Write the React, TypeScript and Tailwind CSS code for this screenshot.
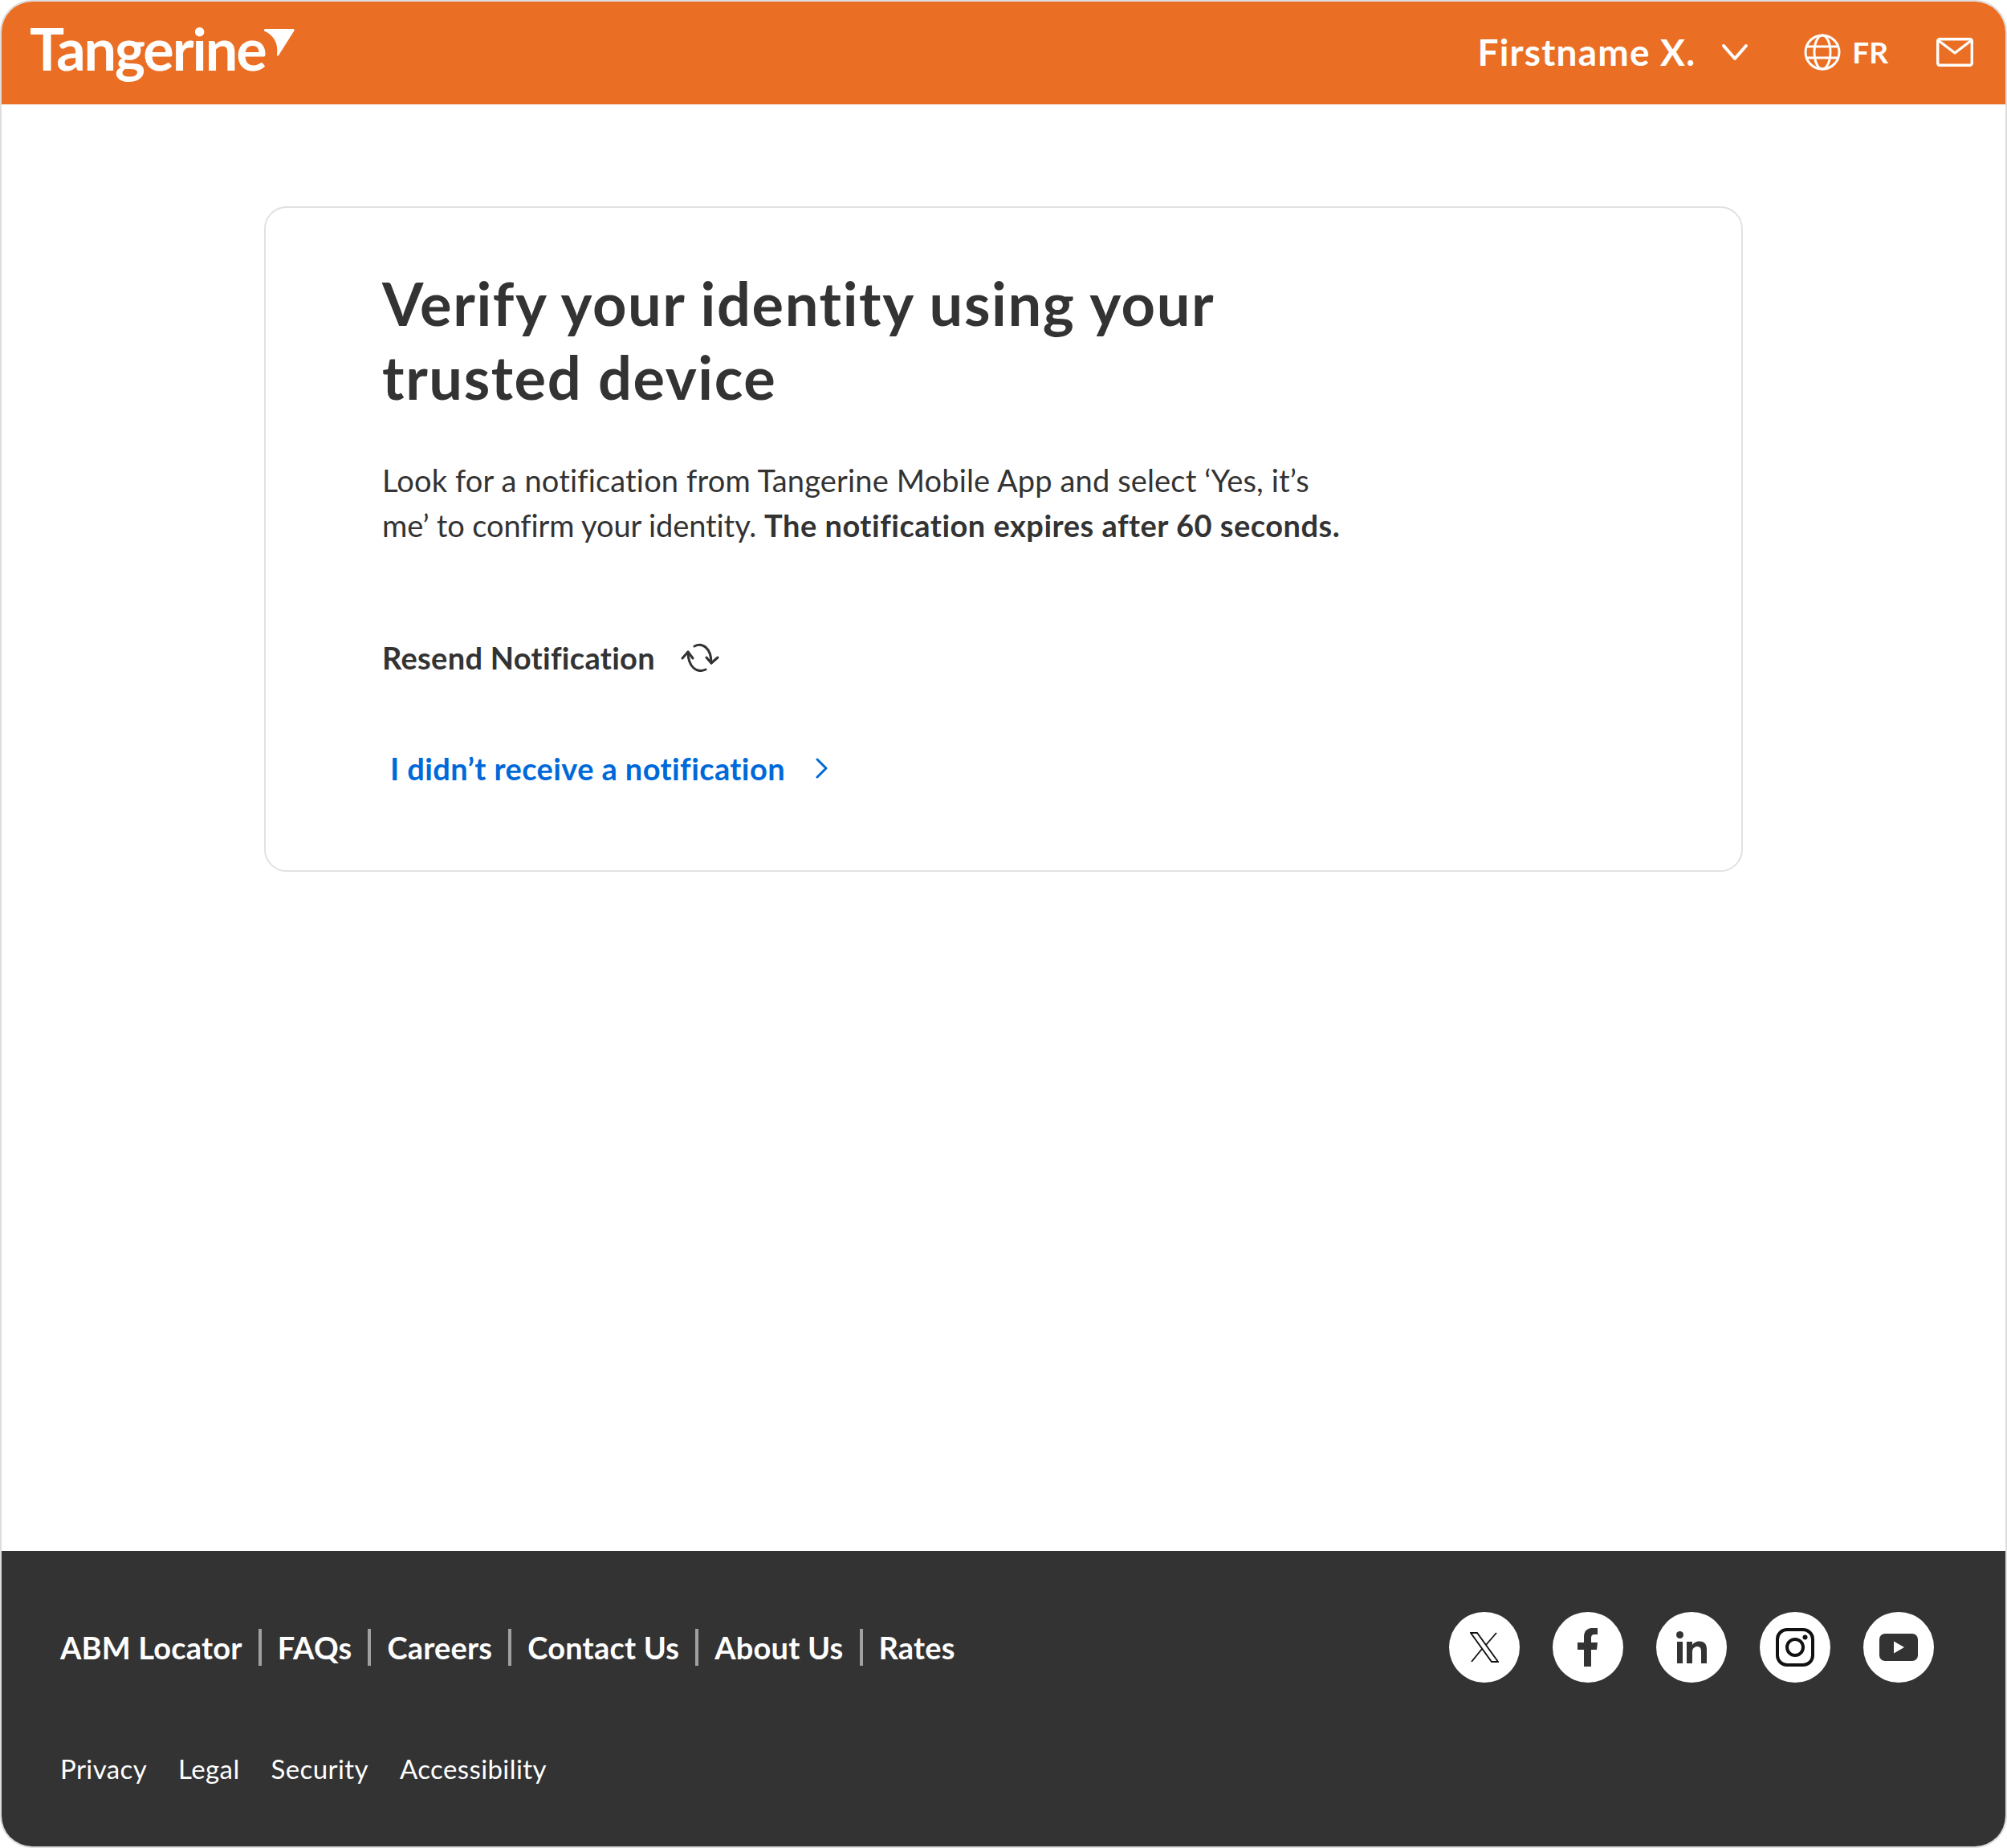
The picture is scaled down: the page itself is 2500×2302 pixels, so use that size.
const mainLinks = ['ABM Locator', 'FAQs', 'Careers', 'Contact Us', 'About Us', 'Rates'];
const legalLinks = ['Privacy', 'Legal', 'Security', 'Accessibility'];

function RefreshIcon() {
  return (
    <svg width="48" height="36" viewBox="0 0 48 36" fill="none" stroke="#333333" strokeWidth="3" strokeLinecap="round" strokeLinejoin="round">
      <path d="M17 4C27 -1 38 6 38 25" />
      <path d="M32 18L38 25L46 18" />
      <path d="M31 33C20 38 9 30 9 11" />
      <path d="M2 19L9 11L15 19" />
    </svg>
  );
}

function GlobeIcon() {
  return (
    <svg width="46" height="46" viewBox="0 0 46 46" fill="none" stroke="white" strokeWidth="3">
      <circle cx="23" cy="23" r="21" />
      <ellipse cx="23" cy="23" rx="10" ry="21" />
      <path d="M4 16H42M4 30H42" />
    </svg>
  );
}

function MailIcon() {
  return (
    <svg width="46" height="36" viewBox="0 0 46 36" fill="none" stroke="white" strokeWidth="3.4" strokeLinejoin="round">
      <rect x="1.700" y="1.700" width="42.600" height="32.600" rx="2.500" />
      <path d="M2 3L23 19L44 3" />
    </svg>
  );
}

function SocialCircle({ children }: { children: React.ReactNode }) {
  return <div className="w-[88px] h-[88px] rounded-full bg-white flex items-center justify-center">{children}</div>;
}

export default function App() {
  return (
    <div className="w-[2500px] h-[2302px] flex flex-col overflow-hidden rounded-[40px] border-2 border-[#dddddd] bg-white text-[#333333] font-['Lato',sans-serif]">
      {/* Header */}
      <header className="h-[128px] shrink-0 bg-[#ea6f24] text-white flex items-start justify-between pl-[35px] pr-[40px]">
        <div className="flex items-start pt-[15px]">
          <span className="text-[72px] leading-[86px] font-bold tracking-[-2.1px]">Tangerine</span>
          <svg className="mt-[19px] -ml-[2px]" width="38" height="34" viewBox="0 0 38 34" fill="white">
            <path d="M0 1C0 0 1 0 2 0H36C38 0 38 2 37 3L18 33C17 34 16 34 16 32C18 18 12 8 1 3C0 3 0 2 0 1Z" />
          </svg>
        </div>
        <div className="flex items-center h-[126px]">
          <span className="text-[46px] leading-[56px] font-bold tracking-[1.2px]">Firstname X.</span>
          <svg className="ml-[32px]" width="34" height="22" viewBox="0 0 34 22" fill="none" stroke="white" strokeWidth="4" strokeLinecap="round" strokeLinejoin="round">
            <path d="M3 3L17 19L31 3" />
          </svg>
          <div className="ml-[69px]">
            <GlobeIcon />
          </div>
          <span className="ml-[14px] text-[37px] font-bold">FR</span>
          <div className="ml-[60px]">
            <MailIcon />
          </div>
        </div>
      </header>

      {/* Card */}
      <main className="flex-1 px-[327px] pt-[127px]">
        <div className="h-[829px] rounded-[28px] border-2 border-[#e1e1e1] pl-[145px] pt-[73px]">
          <h1 className="text-[74px] leading-[92px] font-bold tracking-[1.6px]">
            Verify your identity using your
            <br />
            trusted device
          </h1>
          <p className="mt-[54px] text-[38px] leading-[56px] tracking-[0.15px]">
            Look for a notification from Tangerine Mobile App and select ‘Yes, it’s
            <br />
            <span className="tracking-[-0.1px]">me’ to confirm your identity.</span>{' '}
            <span className="font-bold tracking-[0.5px]">The notification expires after 60 seconds.</span>
          </p>
          <div className="mt-[109px] flex items-center gap-[32px]">
            <span className="text-[38px] leading-[56px] font-bold tracking-[0.3px]">Resend Notification</span>
            <RefreshIcon />
          </div>
          <a className="mt-[82px] ml-[10px] flex items-center text-[38px] leading-[56px] font-bold tracking-[0.4px] text-[#0069d9]">
            I didn’t receive a notification
            <svg className="ml-[37px]" width="16" height="26" viewBox="0 0 16 26" fill="none" stroke="#0069d9" strokeWidth="3" strokeLinecap="round" strokeLinejoin="round">
              <path d="M3 2L14 13L3 24" />
            </svg>
          </a>
        </div>
      </main>

      {/* Footer */}
      <footer className="h-[368px] shrink-0 bg-[#333333] text-white pl-[73px] pr-[89px]">
        <div className="flex items-center justify-between pt-[76px]">
          <div className="flex items-center">
            {mainLinks.map((link, i) => (
              <div key={link} className="flex items-center">
                <span className="text-[38px] leading-[46px] font-bold tracking-[0.2px]">{link}</span>
                {i < mainLinks.length - 1 && <span className="w-[4px] h-[46px] bg-[#a0a0a0] mx-[20px]" />}
              </div>
            ))}
          </div>
          <div className="flex gap-[41px]">
            <SocialCircle>
              <svg width="36" height="38" viewBox="0 0 36 38" fill="none" stroke="#111111" strokeWidth="1.8">
                <path d="M1 1H9L35 37H27Z" />
                <path d="M33 1L20 16" />
                <path d="M15 21L2 37" />
              </svg>
            </SocialCircle>
            <SocialCircle>
              {/* f */}
              <svg width="26" height="48" viewBox="0 0 26 48" fill="#333333">
                <path d="M8 48V27H0V18H8V11C8 3 13 0 19 0H25V8H21C18 8 17 10 17 12V18H25L24 27H17V48Z" />
              </svg>
            </SocialCircle>
            <SocialCircle>
              <svg width="38" height="40" viewBox="0 0 38 40" fill="#333333">
                <circle cx="4.500" cy="4.500" r="4.500" />
                <rect x="1" y="13" width="7" height="27" />
                <path d="M13 13H20V17C22 14 25 12.500 29 12.500C35 12.500 38 16 38 23V40H31V25C31 21 29.500 19 26.500 19C23 19 20 21 20 26V40H13Z" />
              </svg>
            </SocialCircle>
            <SocialCircle>
              <svg width="48" height="48" viewBox="0 0 48 48" fill="none" stroke="#111111" strokeWidth="4">
                <rect x="2" y="2" width="44" height="44" rx="12" />
                <circle cx="24" cy="24" r="10" />
                <circle cx="36.500" cy="11.500" r="3" fill="#111111" stroke="none" />
              </svg>
            </SocialCircle>
            <SocialCircle>
              <svg width="48" height="34" viewBox="0 0 48 34">
                <rect width="48" height="34" rx="7" fill="#333333" />
                <path d="M18 9.500L31 17L18 24.500Z" fill="white" />
              </svg>
            </SocialCircle>
          </div>
        </div>
        <div className="mt-[87px] flex gap-[39px] text-[33px] leading-[40px] tracking-[0.4px]">
          {legalLinks.map((link) => (
            <span key={link}>{link}</span>
          ))}
        </div>
      </footer>
    </div>
  );
}
